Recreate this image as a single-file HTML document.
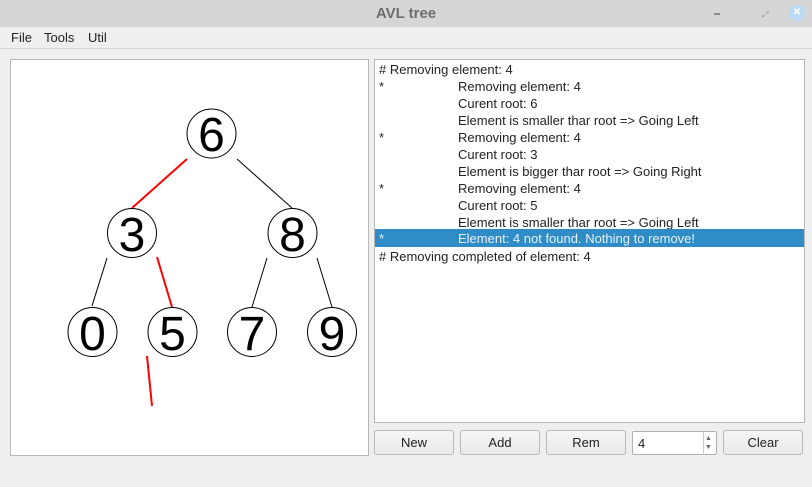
<!DOCTYPE html>
<html><head><meta charset="utf-8"><style>
*{margin:0;padding:0;box-sizing:border-box}
body{width:812px;height:487px;background:#efefef;font-family:"Liberation Sans",sans-serif;position:relative;overflow:hidden;font-size:13px;color:#222}
.title{position:absolute;left:0;top:0;width:812px;height:27px;background:#d6d6d6;text-align:center;line-height:27px;font-weight:bold;font-size:15px;color:#6d6d6d}
.menu{position:absolute;top:27px;left:0;width:812px;height:22px;border-bottom:1px solid #d4d4d4;line-height:22px}
.menu span{position:absolute;top:0}
.left{position:absolute;left:10px;top:59px;width:359px;height:397px;background:#fff;border:1px solid #b8b8b8}
.list{position:absolute;left:374px;top:59px;width:431px;height:364px;background:#fff;border:1px solid #b8b8b8}
.row{position:absolute;left:0;width:429px;height:17px;line-height:19px;font-size:13px;white-space:nowrap}
.row .a{position:absolute;left:4px}
.row .b{position:absolute;left:83px}
.sel{background:#308cc6;color:#e8f2fa}
.btn{position:absolute;top:430px;height:25px;border:1px solid #b9b9b9;border-radius:3px;background:linear-gradient(#f6f6f6,#e9e9e9);text-align:center;line-height:23px;font-size:13px}
.spin{position:absolute;left:632px;top:431px;width:85px;height:24px;background:#fff;border:1px solid #b0b0b0;border-radius:2px}
</style></head><body>
<div class="title">AVL tree</div>
<div style="position:absolute;left:714px;top:13px;width:6px;height:2px;background:#888"></div>
<div style="position:absolute;left:762px;top:10px;font-size:8px;color:#888">⤢</div>
<div style="position:absolute;left:789px;top:5px;width:16px;height:16px;border-radius:50%;background:#bcd9f5;color:#fff;font-size:10px;text-align:center;line-height:16px;font-weight:bold">✕</div>
<div class="menu"><span style="left:11px">File</span><span style="left:44px">Tools</span><span style="left:88px">Util</span></div>
<div class="left">
<svg width="359" height="397" viewBox="10 59 359 397" style="position:absolute;left:-1px;top:-1px">
<g stroke-width="1">
<line x1="187" y1="159" x2="132" y2="208" stroke="red" stroke-width="2"/>
<line x1="237" y1="159" x2="292" y2="208" stroke="#000"/>
<line x1="107" y1="258" x2="92" y2="306" stroke="#000"/>
<line x1="157" y1="257" x2="172" y2="307" stroke="red" stroke-width="2"/>
<line x1="267" y1="258" x2="252" y2="307" stroke="#000"/>
<line x1="317" y1="258" x2="332" y2="307" stroke="#000"/>
<line x1="147" y1="356" x2="152" y2="406" stroke="red" stroke-width="2"/>
</g>
<g fill="#fff" stroke="#000">
<circle cx="211.5" cy="133.5" r="24.5"/><circle cx="132" cy="233" r="24.5"/><circle cx="292.5" cy="233" r="24.5"/>
<circle cx="92.5" cy="332" r="24.5"/><circle cx="172.5" cy="332" r="24.5"/><circle cx="252" cy="332" r="24.5"/><circle cx="332" cy="332" r="24.5"/>
</g>
<g font-family="Liberation Sans,sans-serif" font-size="48" text-anchor="middle" fill="#000">
<text x="211.5" y="151">6</text><text x="132" y="251">3</text><text x="292.5" y="251">8</text>
<text x="92.5" y="350">0</text><text x="172.5" y="350">5</text><text x="252" y="350">7</text><text x="332" y="350">9</text>
</g></svg></div>
<div class="list">
<div class="row" style="top:0"><span class="a"># Removing element: 4</span></div>
<div class="row" style="top:17px"><span class="a">*</span><span class="b">Removing element: 4</span></div>
<div class="row" style="top:34px"><span class="b">Curent root: 6</span></div>
<div class="row" style="top:51px"><span class="b">Element is smaller thar root =&gt; Going Left</span></div>
<div class="row" style="top:68px"><span class="a">*</span><span class="b">Removing element: 4</span></div>
<div class="row" style="top:85px"><span class="b">Curent root: 3</span></div>
<div class="row" style="top:102px"><span class="b">Element is bigger thar root =&gt; Going Right</span></div>
<div class="row" style="top:119px"><span class="a">*</span><span class="b">Removing element: 4</span></div>
<div class="row" style="top:136px"><span class="b">Curent root: 5</span></div>
<div class="row" style="top:153px"><span class="b">Element is smaller thar root =&gt; Going Left</span></div>
<div class="row sel" style="top:169px;height:18px"><span class="a">*</span><span class="b">Element: 4 not found. Nothing to remove!</span></div>
<div class="row" style="top:187px"><span class="a"># Removing completed of element: 4</span></div>
</div>
<div class="btn" style="left:374px;width:80px">New</div>
<div class="btn" style="left:460px;width:80px">Add</div>
<div class="btn" style="left:546px;width:80px">Rem</div>
<div class="spin"><span style="position:absolute;left:5px;top:4px">4</span>
<div style="position:absolute;left:70px;top:0;width:1px;height:22px;background:#ccc"></div>
<div style="position:absolute;left:72px;top:2px;font-size:7px;color:#666;line-height:9px">▲<br>▼</div></div>
<div class="btn" style="left:723px;width:80px">Clear</div>
</body></html>
